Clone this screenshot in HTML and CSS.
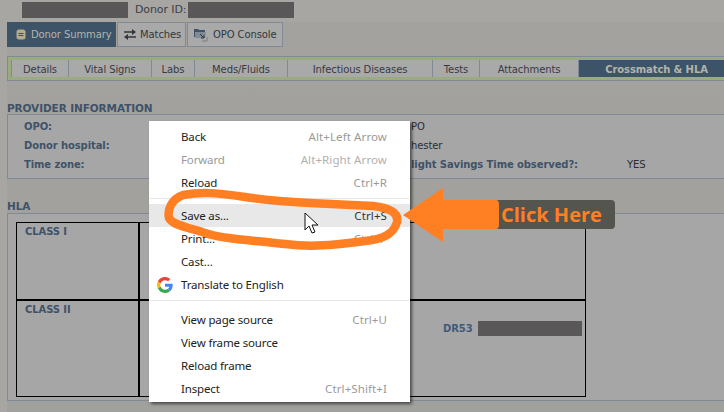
FILE: index.html
```html
<!DOCTYPE html>
<html lang="en">
<head>
  <meta charset="UTF-8">
  <meta name="viewport" content="width=device-width, initial-scale=1">
  <title>Donor Summary</title>
  <link rel="stylesheet" href="styles.css">
</head>
<body>

  <div class="topline">
    <span class="redact redact-name"></span>
    <span class="donor-id">Donor ID:</span>
    <span class="redact redact-id"></span>
  </div>

  <div class="page">
    <div class="tabs">
      <a class="tab tab-on">
        <svg width="10" height="11" viewBox="0 0 10 11"><rect x="0.5" y="0.5" width="9" height="10" rx="2.5" fill="#b3ad8c"/><path d="M2.5 4.5h5M2.5 6.5h5" stroke="#4a4f4f"/></svg>
        Donor Summary
      </a>
      <a class="tab tab-match">
        <svg width="12" height="11" viewBox="0 0 12 11"><path d="M0 3h8M12 8H4" stroke="#33373a" stroke-width="1.6"/><path d="M8 0l4 3-4 3zM4 5l-4 3 4 3z" fill="#33373a"/></svg>
        Matches
      </a>
      <a class="tab tab-opo">
        <svg width="14" height="14" viewBox="0 0 14 14"><path d="M0 1h4l1 1h6v7H0z" fill="#3f5268"/><path d="M1 4h11l-1 6H1z" fill="#7f8c97"/><path d="M6 6l4 4M10 7v3H7" stroke="#2f3438" fill="none"/><path d="M13 9v4H8" stroke="#7c7c7c" fill="none"/></svg>
        OPO Console
      </a>
    </div>

    <div class="subnav">
      <div class="subnav-in">
        <a class="sub sub-details">Details</a>
        <a class="sub sub-vital">Vital Signs</a>
        <a class="sub sub-labs">Labs</a>
        <a class="sub sub-meds">Meds/Fluids</a>
        <a class="sub sub-inf">Infectious Diseases</a>
        <a class="sub sub-tests">Tests</a>
        <a class="sub sub-att">Attachments</a>
        <a class="sub sub-cross">Crossmatch &amp; HLA</a>
      </div>
    </div>

    <h3 class="sec-title sec-provider">PROVIDER INFORMATION</h3>
    <div class="panel provider">
      <b>OPO:</b><span class="val">PO</span><span></span><span></span>
      <b>Donor hospital:</b><span class="val">hester</span><span></span><span></span>
      <b>Time zone:</b><b>light Savings Time observed?:</b><span></span><span class="val">YES</span>
    </div>

    <h3 class="sec-title sec-hla">HLA</h3>
    <div class="panel hla">
      <div class="hla-grid">
        <div class="cell cell-name">CLASS I</div>
        <div class="cell"></div>
        <div class="cell cell-name row2">CLASS II</div>
        <div class="cell row2 dr-cell">
          <b>DR53</b><span class="redact redact-dr"></span>
        </div>
      </div>
    </div>
  </div>

  <div class="menu">
    <div class="item"><span>Back</span><span class="key">Alt+Left Arrow</span></div>
    <div class="item off"><span>Forward</span><span class="key">Alt+Right Arrow</span></div>
    <div class="item"><span>Reload</span><span class="key">Ctrl+R</span></div>
    <div class="sep"></div>
    <div class="item hover"><span>Save as...</span><span class="key">Ctrl+S</span></div>
    <div class="item"><span>Print...</span><span class="key">Ctrl+P</span></div>
    <div class="item"><span>Cast...</span></div>
    <div class="item">
      <svg class="g-logo" width="16" height="16" viewBox="0 0 48 48">
        <path fill="#ea4335" d="M24 9.500c3.500 0 6.700 1.200 9.200 3.600l6.900-6.900C35.900 2.400 30.500 0 24 0 14.600 0 6.500 5.400 2.600 13.200l8 6.200C12.500 13.700 17.800 9.500 24 9.500z"/>
        <path fill="#4285f4" d="M47 24.500c0-1.600-.1-3.100-.4-4.500H24v9h12.900c-.6 3-2.200 5.500-4.700 7.200l7.700 6c4.500-4.200 7.100-10.300 7.100-17.700z"/>
        <path fill="#fbbc05" d="M10.600 28.600c-.5-1.400-.8-3-.8-4.600s.3-3.200.8-4.600l-8-6.200C.9 16.500 0 20.100 0 24s.9 7.500 2.600 10.800z"/>
        <path fill="#34a853" d="M24 48c6.500 0 11.900-2.100 15.900-5.800l-7.700-6c-2.200 1.400-4.900 2.300-8.200 2.300-6.200 0-11.500-4.200-13.400-9.900l-8 6.200C6.500 42.600 14.600 48 24 48z"/>
      </svg>
      <span>Translate to English</span>
    </div>
    <div class="sep sep-low"></div>
    <div class="item"><span>View page source</span><span class="key">Ctrl+U</span></div>
    <div class="item"><span>View frame source</span></div>
    <div class="item"><span>Reload frame</span></div>
    <div class="item"><span>Inspect</span><span class="key">Ctrl+Shift+I</span></div>
  </div>

  <!-- annotation drawn on top of the screenshot -->
  <svg class="oval" width="724" height="412" viewBox="0 0 724 412">
    <path d="M183 195C205 191 225 194 245 197C270 201 290 202 310 203C335 204 355 205 373 206C390 208 399 213 397 222C394 233 385 239 365 241C340 244 315 248 285 244C255 240 225 240 205 233C190 228 172 225 169 218C167 209 172 199 183 195Z" fill="none" stroke="#ff7f22" stroke-width="8.500" stroke-linejoin="round"/>
    <path d="M305 213v17l4-4 3 7 3-1-3-7h6z" fill="#fff" stroke="#111" stroke-width="1"/>
  </svg>

  <div class="callout">
    <svg class="arrow" width="96" height="54" viewBox="0 0 96 54"><path d="M0 27L40 0V12H92Q96 12 96 16V37Q96 41 92 41H40V54Z" fill="#ff7f22"/></svg>
    <span class="callout-text">Click Here</span>
  </div>

</body>
</html>
```

FILE: styles.css
```css
body {
  margin: 0;
  width: 724px;
  height: 412px;
  overflow: hidden;
  background: #a7a6a3;
  font-family: "DejaVu Sans", sans-serif;
  font-size: 10px;
  letter-spacing: -0.1px;
  color: #2f3134;
  position: relative;
}
.topline {
  height: 22px;
  padding: 2px 0 0 22px;
  box-sizing: border-box;
  display: flex;
  gap: 7px;
  align-items: flex-start;
}
.redact {
  display: inline-block;
  background: #595757;
}
.redact-name, .redact-id {
  width: 106px;
  height: 16px;
}
.redact-id { margin-left: -5px; }
.donor-id {
  font-size: 11px;
  line-height: 16px;
  color: #3c4045;
}
.page {
  height: 390px;
  margin-left: 7px;
  background: linear-gradient(#a3a29f, #a2a19e 60%, #a0a09c);
}

.tabs {
  display: flex;
  gap: 1px;
  height: 25px;
}
.tab {
  display: flex;
  align-items: center;
  gap: 5px;
  box-sizing: border-box;
  border: 1px solid #7f8a95;
  background: #a9a9a9;
  color: #33373b;
}
.tab-on {
  width: 109px;
  padding-left: 8px;
  background: #3c5368;
  border-color: #3c5368;
  color: #b4b4ad;
}
.tab-match {
  width: 69px;
  padding-left: 6px;
  gap: 4px;
}
.tab-opo {
  width: 96px;
  padding-left: 6px;
}

.subnav {
  margin-top: 9px;
  height: 25px;
  box-sizing: border-box;
  border: 1px solid #7f8a95;
  border-right: 0;
  background: #9aab80;
  padding: 3px 0 3px 3px;
}
.subnav-in {
  display: flex;
  height: 17px;
  background: #a9a9a9;
  border-left: 1px solid #7f8a95;
}
.sub {
  box-sizing: border-box;
  text-align: center;
  line-height: 19px;
  border-right: 1px solid #7f8a95;
  color: #373b40;
}
.sub-details { width: 57px; }
.sub-vital { width: 83px; }
.sub-labs { width: 43px; }
.sub-meds { width: 93px; }
.sub-inf { width: 145px; }
.sub-tests { width: 47px; }
.sub-att { width: 99px; }
.sub-cross {
  flex: 1;
  border: 0;
  padding-left: 10px;
  background: #3c5368;
  color: #b4b4ad;
  font-weight: bold;
}

.sec-title {
  margin: 0;
  font-size: 10.500px;
  line-height: 13px;
  color: #3f5268;
}
.sec-provider {
  margin-top: 21px;
  margin-bottom: -1px;
}
.sec-hla { margin-top: 21px; }

.panel {
  box-sizing: border-box;
  border: 1px solid #7f8a95;
  border-right: 0;
  background: #a6a6a6;
}
.provider {
  height: 65px;
  padding: 2px 0 0 16px;
  display: grid;
  grid-template-columns: 387px 164px 52px auto;
  grid-auto-rows: 19px;
  align-items: center;
}
.provider b {
  color: #3f5268;
  white-space: nowrap;
}
.val {
  white-space: nowrap;
  color: #2b2c2e;
}

.hla {
  height: 188px;
  padding: 8px 0 0 8px;
}
.hla-grid {
  width: 570px;
  height: 175px;
  box-sizing: border-box;
  display: grid;
  grid-template-columns: 123px 1fr;
  grid-template-rows: 76px 1fr;
  border: 1px solid #000;
}
.cell {
  box-sizing: border-box;
}
.cell-name {
  border-right: 2px solid #000;
  padding: 3px 0 0 8px;
  font-weight: bold;
  color: #3f5268;
}
.row2 {
  border-top: 2px solid #000;
}
.dr-cell {
  display: flex;
  align-items: flex-start;
  gap: 5px;
  padding: 20px 0 0 303px;
}
.dr-cell b {
  color: #3f5b7a;
  line-height: 15px;
}
.redact-dr {
  width: 104px;
  height: 15px;
}

.menu {
  position: absolute;
  left: 149px;
  top: 121px;
  width: 261px;
  height: 281px;
  box-sizing: border-box;
  padding: 4px 0;
  background: #fff;
  box-shadow: 2px 2px 3px rgba(0,0,0,.55);
  font-family: "Noto Sans", sans-serif;
  font-size: 11.500px;
  letter-spacing: -0.15px;
  color: #222;
}
.item {
  position: relative;
  height: 23px;
  padding: 0 23px 0 32px;
  display: flex;
  justify-content: space-between;
  align-items: center;
}
.item.off { color: #9a9a9a; }
.item.hover { background: #e8e8e8; }
.key {
  color: #9a9a9a;
  letter-spacing: 0.1px;
}
.off .key { color: #b0b0b0; }
.hover .key { color: #333; }
.sep {
  height: 10px;
  box-sizing: border-box;
  position: relative;
}
.sep::before {
  content: "";
  position: absolute;
  left: 1px;
  right: 1px;
  top: 4px;
  border-top: 1px solid #e6e6e6;
}
.sep-low { height: 12px; }
.g-logo {
  position: absolute;
  left: 8px;
  top: 4px;
}

.oval {
  position: absolute;
  left: 0;
  top: 0;
}
.callout {
  position: absolute;
  left: 403px;
  top: 188px;
  width: 212px;
  height: 54px;
}
.callout::before {
  content: "";
  position: absolute;
  left: 92px;
  top: 12px;
  width: 120px;
  height: 29px;
  border-radius: 4px;
  background: #55554f;
}
.arrow {
  position: absolute;
  left: 0;
  top: 0;
}
.callout-text {
  position: absolute;
  left: 98px;
  top: 12px;
  line-height: 29px;
  font-family: "Open Sans", sans-serif;
  font-weight: 700;
  font-size: 20px;
  letter-spacing: 0;
  color: #ff7f22;
  white-space: nowrap;
}
```
